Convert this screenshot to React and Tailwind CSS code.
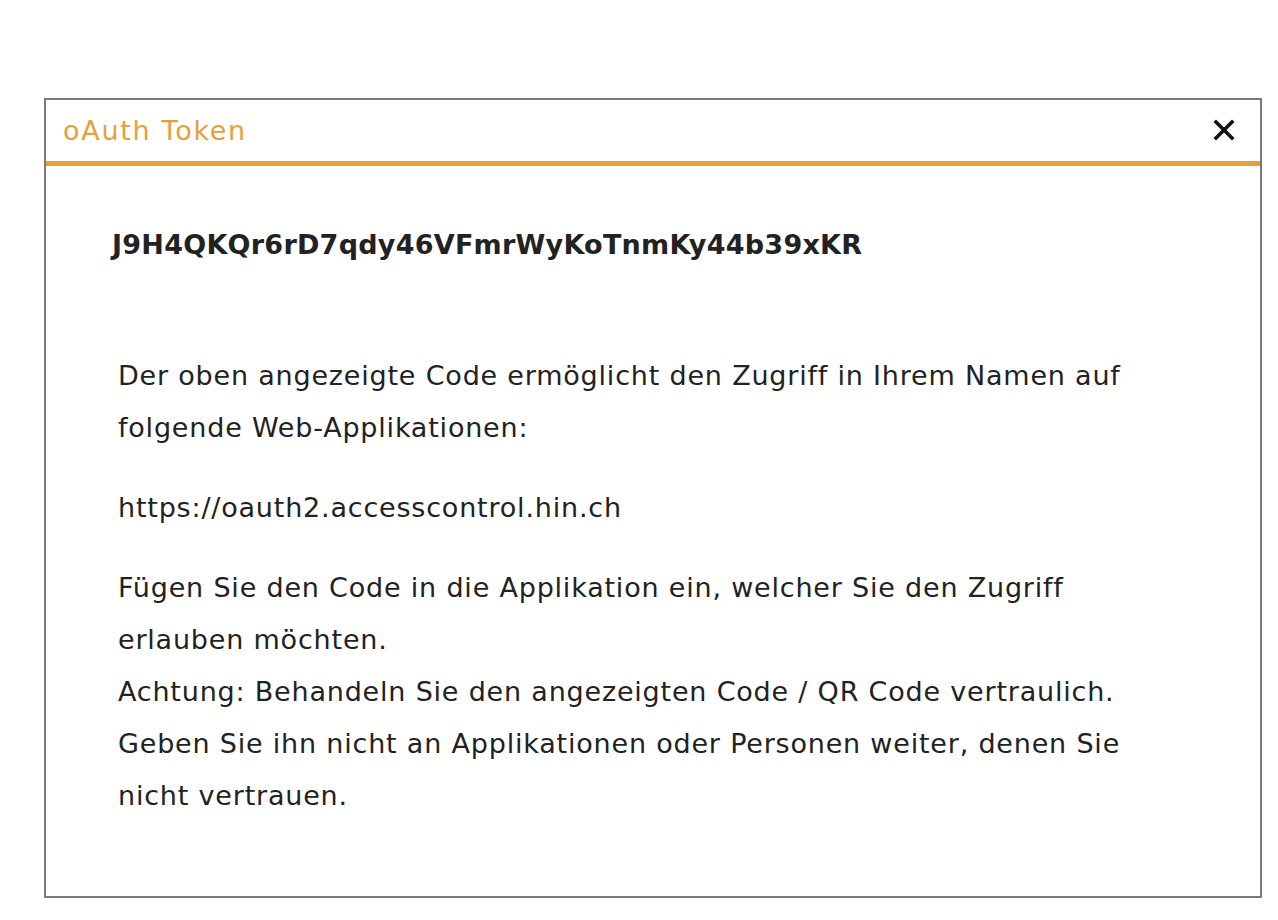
import React from 'react';

const App = () => {
    return (
        <div className="w-[1278px] h-[920px] bg-white pt-[98px] pl-[44px]" style={{ fontFamily: '"DejaVu Sans", Verdana, sans-serif' }}>
            <div className="w-[1218px] h-[800px] border-2 border-[#7a7a7a] bg-white">
                {/* Header */}
                <div className="h-[66px] flex items-center justify-between pl-[17px] pr-[25px] border-b-[5px] border-[#e89f38]">
                    <h2 className="text-[27px] text-[#e89f38] tracking-[1.7px] mt-[1px]">oAuth Token</h2>
                    <button className="-mt-[2px]">
                        <svg width="22" height="22" viewBox="0 0 22 22">
                            <path d="M3 3 L19 19 M19 3 L3 19" stroke="#111" strokeWidth="3.6" strokeLinecap="square" />
                        </svg>
                    </button>
                </div>

                {/* Body */}
                <div className="pl-[66px] pr-[40px] pt-[63px] text-[#222]">
                    <p className="font-bold text-[27px] leading-[32px] tracking-[0.25px]">J9H4QKQr6rD7qdy46VFmrWyKoTnmKy44b39xKR</p>
                    <div className="mt-[89px] pl-[6px] text-[27px] leading-[52px] tracking-[0.8px]">
                        <p>Der oben angezeigte Code ermöglicht den Zugriff in Ihrem Namen auf<br />folgende Web-Applikationen:</p>
                        <p className="mt-[28px]">https://oauth2.accesscontrol.hin.ch</p>
                        <p className="mt-[28px]">
                            Fügen Sie den Code in die Applikation ein, welcher Sie den Zugriff<br />
                            erlauben möchten.<br />
                            Achtung: Behandeln Sie den angezeigten Code / QR Code vertraulich.<br />
                            Geben Sie ihn nicht an Applikationen oder Personen weiter, denen Sie<br />
                            nicht vertrauen.
                        </p>
                    </div>
                </div>
            </div>
        </div>
    );
};

export default App;
